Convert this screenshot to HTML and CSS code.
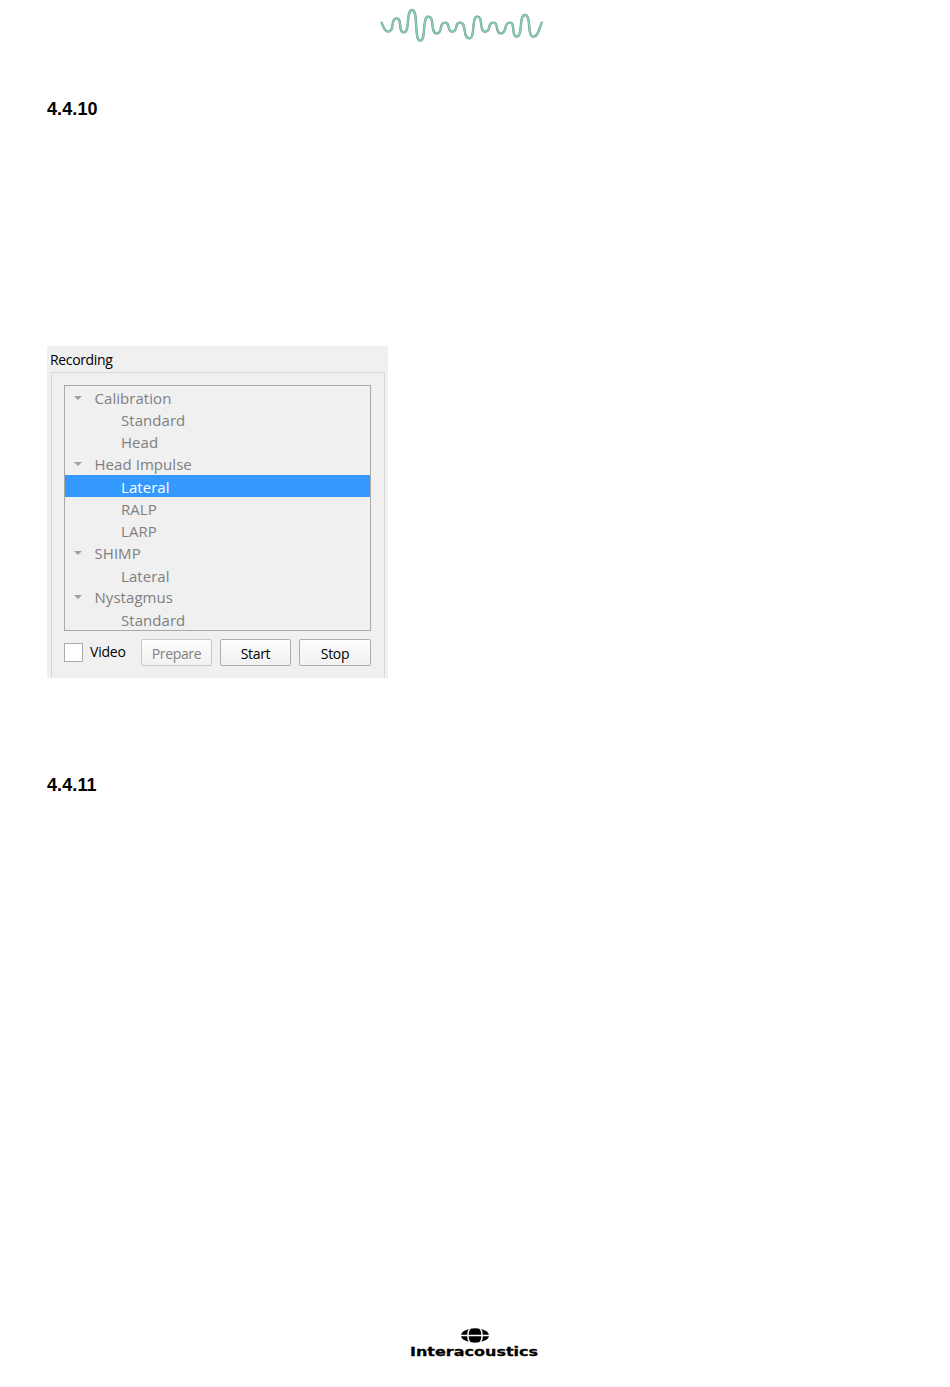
FILE: index.html
```html
<!DOCTYPE html>
<html lang="en">
<head>
<meta charset="utf-8">
<title>Recording</title>
<link rel="stylesheet" href="styles.css">
</head>
<body>
<div class="page">
  <header class="top-logo">
    <svg class="wave" viewBox="0 0 570 150" width="190" height="50" aria-hidden="true">
      <defs>
        <path id="wave-line" d="M35 68C40 80 43 95 55 95C75 95 60 55 80 55C97 55 84 97 101 97C122 97 106 30 127 30C145 30 132 122 150 122C170 122 155 50 175 50C195 50 180 100 200 100C220 100 205 68 225 68C243 68 229 95 247 95C265 95 252 68 270 68C292 68 276 115 298 115C317 115 303 50 322 50C340 50 327 95 345 95C365 95 350 68 370 68C388 68 374 100 392 100C414 100 398 68 420 68C436 68 424 110 440 110C460 110 445 45 465 45C485 45 470 110 490 110C505 110 508 85 515 68"/>
      </defs>
      <g fill="none" stroke-linecap="round" stroke-linejoin="round">
        <use href="#wave-line" class="wave-dark"/>
        <use href="#wave-line" class="wave-green"/>
      </g>
    </svg>
  </header>

  <h2 class="heading first">4.4.10</h2>

  <section class="panel">
    <div class="panel-title">Recording</div>
    <div class="group">
      <ul class="tree">
        <li class="row parent"><span class="arrow"></span>Calibration</li>
        <li class="row child">Standard</li>
        <li class="row child">Head</li>
        <li class="row parent"><span class="arrow"></span>Head Impulse</li>
        <li class="row child selected">Lateral</li>
        <li class="row child">RALP</li>
        <li class="row child">LARP</li>
        <li class="row parent"><span class="arrow"></span>SHIMP</li>
        <li class="row child">Lateral</li>
        <li class="row parent"><span class="arrow"></span>Nystagmus</li>
        <li class="row child">Standard</li>
      </ul>
      <div class="controls">
        <label class="video"><span class="check"></span><span class="video-text">Video</span></label>
        <button class="btn disabled" type="button">Prepare</button>
        <button class="btn" type="button">Start</button>
        <button class="btn" type="button">Stop</button>
      </div>
    </div>
  </section>

  <h2 class="heading second">4.4.11</h2>

  <footer class="brand">
    <svg class="globe" viewBox="0 0 28 15" width="28" height="15" aria-hidden="true">
      <ellipse cx="14" cy="7.5" rx="14" ry="7.2" fill="#000"/>
      <path d="M9.5 0C6 3 6 12 9.5 15M18.5 0C22 3 22 12 18.5 15M0 7.5H28" fill="none" stroke="#fff" stroke-width="1.6"/>
    </svg>
    <div class="brand-name">Interacoustics</div>
  </footer>
</div>
</body>
</html>
```

FILE: styles.css
```css
* { box-sizing: border-box; }
html, body { margin: 0; padding: 0; background: #fff; }
.page {
  width: 950px;
  height: 1387px;
  padding: 0 0 0 47px;
  display: flex;
  flex-direction: column;
  align-items: flex-start;
}
.top-logo { height: 50px; margin-left: 323px; }
.wave { display: block; }
.wave-dark { stroke: #6f8f85; stroke-width: 7; }
.wave-green { stroke: #86d0b6; stroke-width: 4.5; }
.heading {
  margin: 0;
  font: bold 18px/22px "Liberation Sans", Arial, sans-serif;
  color: #000;
  letter-spacing: 0.1px;
}
.first { margin-top: 48px; }
.second { margin-top: 96px; }
.panel {
  width: 341px;
  height: 332px;
  margin-top: 226px;
  background: #f0f0f0;
  font: 14px/20px "Open Sans", sans-serif;
  padding: 0 3px 0 4px;
  display: flex;
  flex-direction: column;
}
.panel-title { height: 26px; padding-top: 4px; color: #000; margin-left: -1px; letter-spacing: -0.35px; }
.group {
  flex: 1;
  border: 1px solid #d8d8d8;
  border-bottom: 0;
  padding: 12px 13px 0 12px;
}
.tree {
  list-style: none;
  margin: 0;
  padding: 0;
  height: 246px;
  border: 1px solid #a9a9a9;
  overflow: hidden;
  width: 307px;
  font-size: 15px;
  letter-spacing: 0.05px;
}
.row { height: 22.2px; line-height: 24px; color: #7f7f7f; white-space: nowrap; }
.parent { padding: 1px 0 0 8px; display: flex; align-items: center; }
.child { padding-left: 56px; }
.selected { background: #3399ff; color: #fff; }
.arrow {
  width: 0;
  height: 0;
  margin: 0 12.5px 0 1px;
  border-left: 4.5px solid transparent;
  border-right: 4.5px solid transparent;
  border-top: 4.5px solid #a0a0a0;
}
.controls { display: flex; align-items: center; margin-top: 8px; height: 27px; width: 307px; }
.video { display: flex; align-items: center; color: #000; width: 77px; letter-spacing: -0.2px; }
.video-text { line-height: 18px; height: 20px; }
.check {
  width: 19px;
  height: 19px;
  background: #fff;
  border: 1px solid #a9a9a9;
  margin-right: 7px;
}
.btn {
  width: 71px;
  height: 27px;
  margin: 0 8px 0 0;
  padding: 2px 0 0;
  font: inherit;
  letter-spacing: -0.35px;
  color: #000;
  border: 1px solid #adadad;
  border-radius: 2px;
  background: linear-gradient(#fdfdfd, #f1f1f1);
}
.btn:last-child { width: 72px; margin-right: 0; }
.disabled { color: #7f7f7f; border-color: #c8c8c8; }
.brand {
  margin-top: 532px;
  margin-left: 363px;
  width: 128px;
  display: flex;
  flex-direction: column;
  align-items: center;
}
.globe { display: block; margin-left: 1px; }
.brand-name {
  margin-top: 2px;
  font: bold 13px/14px "DejaVu Sans", sans-serif;
  color: #000;
  white-space: nowrap;
  transform: scaleX(1.23);
  -webkit-text-stroke: 0.3px #000;
}
```
